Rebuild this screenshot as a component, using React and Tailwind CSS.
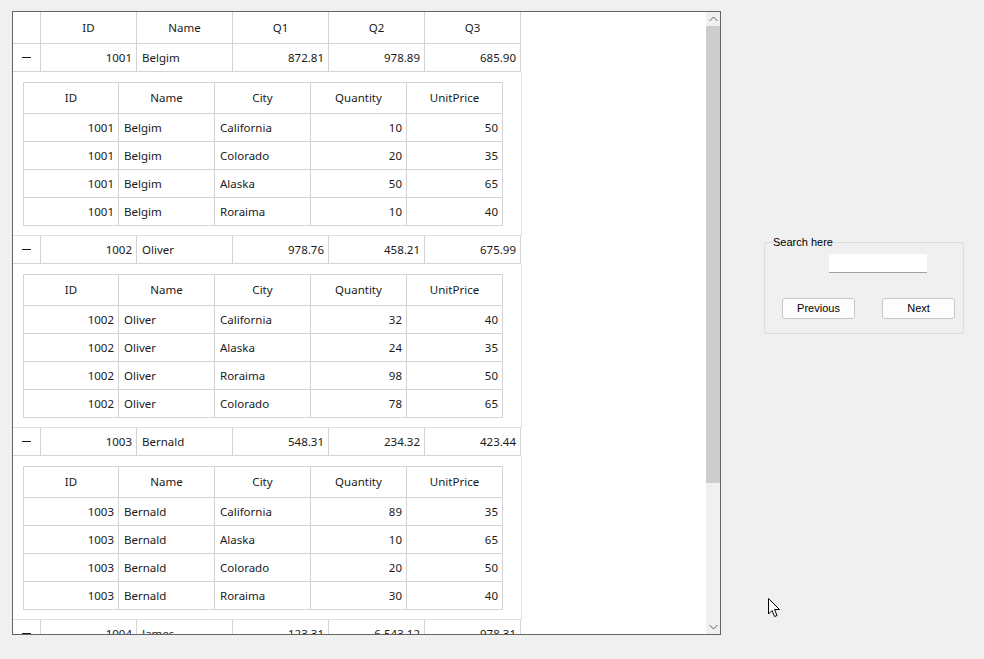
import React from 'react';

const orders = [
    {
        id: 1001, name: 'Belgim', q: ['872.81', '978.89', '685.90'],
        items: [['California', 10, 50], ['Colorado', 20, 35], ['Alaska', 50, 65], ['Roraima', 10, 40]],
    },
    {
        id: 1002, name: 'Oliver', q: ['978.76', '458.21', '675.99'],
        items: [['California', 32, 40], ['Alaska', 24, 35], ['Roraima', 98, 50], ['Colorado', 78, 65]],
    },
    {
        id: 1003, name: 'Bernald', q: ['548.31', '234.32', '423.44'],
        items: [['California', 89, 35], ['Alaska', 10, 65], ['Colorado', 20, 50], ['Roraima', 30, 40]],
    },
    { id: 1004, name: 'James', q: ['123.31', '6,543.12', '978.31'], items: [] },
];

const gridFont = { fontFamily: '"Noto Sans", "Open Sans", sans-serif' };

function Cell({ children, align = 'left', className = '' }) {
    const a = align === 'right' ? 'justify-end pr-[4px]' : align === 'center' ? 'justify-center' : 'justify-start pl-[5px]';
    return (
        <div className={`flex items-center border-r border-[#d4d4d4] shrink-0 ${a} ${className}`}>
            {children}
        </div>
    );
}

function MasterRow({ o }) {
    return (
        <div className="flex h-[28px] border-b border-[#d4d4d4] w-[508px]">
            <Cell align="center" className="w-[28px]">
                <div className="w-[9px] h-px bg-[#1a1a1a]"></div>
            </Cell>
            <Cell align="right" className="w-[96px]">{o.id}</Cell>
            <Cell className="w-[96px]">{o.name}</Cell>
            {o.q.map((v, i) => (
                <Cell key={i} align="right" className="w-[96px]">{v}</Cell>
            ))}
        </div>
    );
}

function DetailTable({ o }) {
    const heads = ['ID', 'Name', 'City', 'Quantity', 'UnitPrice'];
    return (
        <div className="h-[164px] w-[509px] border-b border-r border-[#e0e0e0] pl-[10px] pt-[10px]">
            <div className="w-[480px] border-l border-t border-[#d4d4d4]">
                <div className="flex h-[31px] border-b border-[#d4d4d4]">
                    {heads.map((h, i) => (
                        <Cell key={h} align="center" className={i === 0 ? 'w-[95px]' : 'w-[96px]'}>{h}</Cell>
                    ))}
                </div>
                {o.items.map((it, r) => (
                    <div key={r} className="flex h-[28px] border-b border-[#d4d4d4]">
                        <Cell align="right" className="w-[95px]">{o.id}</Cell>
                        <Cell className="w-[96px]">{o.name}</Cell>
                        <Cell className="w-[96px]">{it[0]}</Cell>
                        <Cell align="right" className="w-[96px]">{it[1]}</Cell>
                        <Cell align="right" className="w-[96px]">{it[2]}</Cell>
                    </div>
                ))}
            </div>
        </div>
    );
}

function ScrollBar() {
    return (
        <div className="w-[14px] h-full bg-[#f0f0f0] flex flex-col">
            <div className="h-[14px] flex items-center justify-center">
                <svg width="9" height="6" viewBox="0 0 9 6"><path d="M0.5 5 L4.5 1 L8.5 5" fill="none" stroke="#606060" strokeWidth="1" /></svg>
            </div>
            <div className="h-[457px] bg-[#cdcdcd]"></div>
            <div className="flex-1"></div>
            <div className="h-[14px] flex items-center justify-center">
                <svg width="9" height="6" viewBox="0 0 9 6"><path d="M0.5 1 L4.5 5 L8.5 1" fill="none" stroke="#606060" strokeWidth="1" /></svg>
            </div>
        </div>
    );
}

export default function App() {
    const heads = ['ID', 'Name', 'Q1', 'Q2', 'Q3'];
    return (
        <div className="relative w-[984px] h-[659px] bg-[#f0f0f0] flex items-start pl-[12px] pt-[11px]">
            <div className="w-[709px] h-[624px] border border-[#646464] bg-white flex text-[11.5px] text-[#1a1a1a]" style={gridFont}>
                <div className="flex-1 overflow-hidden">
                    <div className="flex h-[32px] border-b border-[#d4d4d4] w-[508px]">
                        <Cell className="w-[28px]"></Cell>
                        {heads.map((h) => (
                            <Cell key={h} align="center" className="w-[96px]">{h}</Cell>
                        ))}
                    </div>
                    {orders.map((o) => (
                        <React.Fragment key={o.id}>
                            <MasterRow o={o} />
                            {o.items.length > 0 && <DetailTable o={o} />}
                        </React.Fragment>
                    ))}
                </div>
                <ScrollBar />
            </div>

            <div
                className="relative ml-[43px] mt-[231px] w-[200px] h-[92px] border border-[#dcdcdc] rounded-[2px] text-[11px] text-black"
                style={{ fontFamily: '"Liberation Sans", Arial, sans-serif' }}
            >
                <span className="absolute left-[7px] -top-[7px] bg-[#f0f0f0] px-px leading-[13px]">Search here</span>
                <div className="flex justify-end pr-[36px] pt-[11px]">
                    <div className="w-[98px] h-[19px] bg-white border-b border-[#a0a0a0]"></div>
                </div>
                <div className="flex justify-between pl-[17px] pr-[8px] pt-[25px]">
                    <button className="w-[73px] h-[21px] rounded-[3px] border border-[#c8c8c8] bg-[#fdfdfd] flex items-center justify-center">Previous</button>
                    <button className="w-[73px] h-[21px] rounded-[3px] border border-[#c8c8c8] bg-[#fdfdfd] flex items-center justify-center">Next</button>
                </div>
            </div>

            <svg className="absolute left-[768px] top-[598px]" width="13" height="20" viewBox="0 0 13 20">
                <path d="M0.5 0.5 L0.5 16 L4 12.5 L6.5 18.5 L9 17.5 L6.5 11.5 L11.5 11.5 Z" fill="white" stroke="#000" strokeWidth="1" strokeLinejoin="round" />
            </svg>
        </div>
    );
}
